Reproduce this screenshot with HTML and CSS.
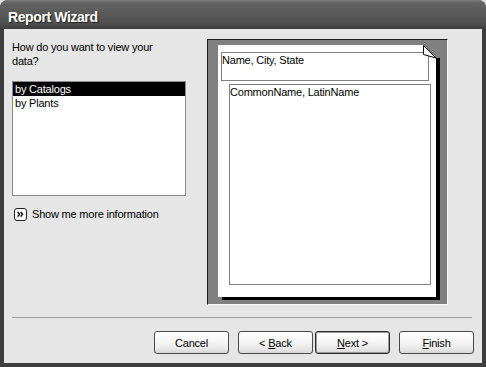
FILE: index.html
```html
<!DOCTYPE html>
<html>
<head>
<meta charset="utf-8">
<link rel="stylesheet" href="styles.css">
</head>
<body>
<div class="window">
  <div class="titlebar">Report Wizard</div>
  <div class="client">
    <div class="main">
      <div class="left">
        <p class="prompt">How do you want to view your data?</p>
        <ul class="list">
          <li class="item selected">by Catalogs</li>
          <li class="item">by Plants</li>
        </ul>
        <div class="more">
          <svg class="more-icon" viewBox="0 0 13 13"><rect x="0.5" y="0.5" width="12" height="12" rx="2.5" fill="#fafafa" stroke="#222"/><path d="M3.6 4 L5.6 6.3 L3.6 8.6 M6.6 4 L8.6 6.3 L6.6 8.6" fill="none" stroke="#000" stroke-width="1.3"/></svg>
          <span>Show me more information</span>
        </div>
      </div>
      <div class="preview">
        <div class="page">
          <div class="group-header">Name, City, State</div>
          <div class="detail">CommonName, LatinName</div>
          <svg class="fold" viewBox="0 0 19 14"><polygon points="1,0 19,0 19,13 14,13" fill="#808080"/><path d="M1.5 0.5 L1.5 9.5 L14 13 Z" fill="#fff" stroke="#000"/></svg>
        </div>
      </div>
    </div>
    <div class="separator"></div>
    <div class="buttons">
      <button class="btn">Cancel</button>
      <button class="btn btn-back">&lt; <u>B</u>ack</button>
      <button class="btn btn-next btn-default"><u>N</u>ext &gt;</button>
      <button class="btn btn-finish"><u>F</u>inish</button>
    </div>
  </div>
</div>
</body>
</html>
```
FILE: styles.css
```css
* { box-sizing: border-box; margin: 0; padding: 0; }
body {
  background: #dcdcdc;
  font-family: "Liberation Sans", Arial, sans-serif;
  font-size: 11px;
  letter-spacing: -0.2px;
  color: #000;
}
.window {
  width: 486px;
  height: 367px;
  background: #3e3e3e;
  border-radius: 8px 8px 0 0;
  display: flex;
  flex-direction: column;
}
.titlebar {
  height: 29px;
  border-radius: 8px 8px 0 0;
  background: linear-gradient(#7c7c7c 0, #626262 3px, #595959 50%, #505050 80%, #3e3e3e 100%);
  padding: 9px 0 0 8px;
  color: #fff;
  font: bold 14px/16px "Liberation Sans", Arial, sans-serif;
  letter-spacing: -0.4px;
  text-shadow: 1px 1px 1px #1e1e1e;
}
.client {
  flex: 1;
  margin: 0 4px 4px;
  background: #e6e6e6;
  display: flex;
  flex-direction: column;
}
.main {
  display: flex;
  padding: 10px 0 0 8px;
}
.left {
  width: 174px;
  padding-top: 1px;
}
.prompt {
  width: 168px;
  line-height: 14px;
}
.list {
  list-style: none;
  margin-top: 13px;
  height: 115px;
  background: #fff;
  border: 1px solid #8a8a8a;
}
.item {
  line-height: 14px;
  padding-left: 2px;
}
.selected {
  background: #000;
  color: #fff;
}
.more {
  display: flex;
  align-items: center;
  gap: 5px;
  margin-top: 11px;
  padding-left: 2px;
  line-height: 14px;
}
.more-icon {
  width: 13px;
  height: 13px;
  display: block;
}
.preview {
  margin-left: 21px;
  width: 241px;
  height: 266px;
  background: #808080;
  border-style: solid;
  border-width: 1px;
  border-color: #1e1e1e #fafafa #fafafa #1e1e1e;
  padding: 5px 11px 7px 10px;
}
.page {
  position: relative;
  height: 252px;
  background: #fff;
  box-shadow: 4px 3px 0 #000;
  padding: 7px 0 0 3px;
}
.group-header {
  width: 208px;
  height: 29px;
  border: 1px solid #808080;
  line-height: 14px;
}
.detail {
  margin: 3px 0 0 8px;
  width: 202px;
  height: 201px;
  border: 1px solid #808080;
  line-height: 14px;
}
.fold {
  position: absolute;
  top: 0;
  right: -5px;
  width: 19px;
  height: 14px;
  display: block;
}
.separator {
  margin: 12px 10px 0 8px;
  height: 1px;
  background: #a0a0a0;
}
.buttons {
  display: flex;
  justify-content: flex-end;
  padding-right: 8px;
  margin-top: 13px;
}
.btn {
  width: 75px;
  height: 23px;
  font: 11px "Liberation Sans", Arial, sans-serif;
  letter-spacing: -0.2px;
  color: #000;
  background: linear-gradient(#ffffff, #f6f6f6 45%, #e8e8e8 80%, #d6d6d6);
  border: 1px solid #4a4a4a;
  border-radius: 3px;
}
.btn u { text-decoration: underline; }
.btn-back { margin-left: 9px; }
.btn-next { margin-left: 2px; }
.btn-finish { margin-left: 9px; }
.btn-default {
  border-color: #2a2a2a;
  box-shadow: inset 0 0 0 1px #9c9c9c;
}
```
